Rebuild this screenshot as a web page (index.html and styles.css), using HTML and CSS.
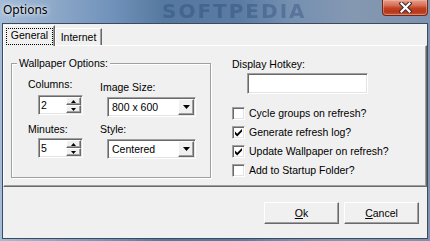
FILE: index.html
```html
<!DOCTYPE html>
<html lang="en">
<head>
    <meta charset="UTF-8">
    <meta name="viewport" content="width=device-width, initial-scale=1.0">
    <title>Options</title>
    <link rel="stylesheet" href="styles.css">
</head>
<body>
    <div class="window">
        <div class="titlebar">
            <span class="title">Options</span>
            <span class="watermark">SOFTPEDIA</span>
            <button class="close-btn" type="button">
                <svg width="13" height="11" viewBox="0 0 13 11">
                    <path d="M2.5 1.5 L10.5 9.5 M10.5 1.5 L2.5 9.5" stroke="#3a2a2a" stroke-width="4.2" stroke-linecap="square"/>
                    <path d="M2.5 1.5 L10.5 9.5 M10.5 1.5 L2.5 9.5" stroke="#fff" stroke-width="2.2" stroke-linecap="square"/>
                </svg>
            </button>
        </div>

        <div class="client">
            <div class="tabs">
                <div class="tab active"><span class="focus">General</span></div>
                <div class="tab">Internet</div>
            </div>

            <div class="tab-panel">
                <fieldset class="group">
                    <legend>Wallpaper Options:</legend>
                    <div class="group-grid">
                        <div class="field-col col-a">
                            <label class="lbl">Columns:</label>
                            <div class="spinner">
                                <span class="spin-value">2</span>
                                <span class="spin-buttons">
                                    <span class="spin-btn"><svg width="5" height="3" viewBox="0 0 5 3"><path d="M2.5 0 L5 3 L0 3 Z"/></svg></span>
                                    <span class="spin-btn"><svg width="5" height="3" viewBox="0 0 5 3"><path d="M0 0 L5 0 L2.5 3 Z"/></svg></span>
                                </span>
                            </div>
                            <label class="lbl lbl-second">Minutes:</label>
                            <div class="spinner spinner-second">
                                <span class="spin-value">5</span>
                                <span class="spin-buttons">
                                    <span class="spin-btn"><svg width="5" height="3" viewBox="0 0 5 3"><path d="M2.5 0 L5 3 L0 3 Z"/></svg></span>
                                    <span class="spin-btn"><svg width="5" height="3" viewBox="0 0 5 3"><path d="M0 0 L5 0 L2.5 3 Z"/></svg></span>
                                </span>
                            </div>
                        </div>
                        <div class="field-col col-b">
                            <label class="lbl">Image Size:</label>
                            <div class="combo">
                                <span class="combo-value">800 x 600</span>
                                <span class="combo-btn"><svg width="7" height="4" viewBox="0 0 7 4"><path d="M0 0 L7 0 L3.5 4 Z"/></svg></span>
                            </div>
                            <label class="lbl lbl-style">Style:</label>
                            <div class="combo combo-second">
                                <span class="combo-value">Centered</span>
                                <span class="combo-btn"><svg width="7" height="4" viewBox="0 0 7 4"><path d="M0 0 L7 0 L3.5 4 Z"/></svg></span>
                            </div>
                        </div>
                    </div>
                </fieldset>

                <div class="right-col">
                    <label class="lbl">Display Hotkey:</label>
                    <div class="textbox"></div>
                    <ul class="checks">
                        <li><span class="checkbox"></span>Cycle groups on refresh?</li>
                        <li><span class="checkbox"><svg width="9" height="9" viewBox="0 0 9 9"><path d="M1 3.5 L3.2 5.7 L8 1 L8 3.6 L3.2 8.4 L1 6.2 Z"/></svg></span>Generate refresh log?</li>
                        <li><span class="checkbox"><svg width="9" height="9" viewBox="0 0 9 9"><path d="M1 3.5 L3.2 5.7 L8 1 L8 3.6 L3.2 8.4 L1 6.2 Z"/></svg></span>Update Wallpaper on refresh?</li>
                        <li><span class="checkbox"></span>Add to Startup Folder?</li>
                    </ul>
                </div>
            </div>

            <div class="buttons">
                <button class="btn" type="button"><u>O</u>k</button>
                <button class="btn" type="button"><u>C</u>ancel</button>
            </div>
        </div>
    </div>
</body>
</html>
```

FILE: styles.css
```css
body {
    margin: 0;
    width: 430px;
    height: 241px;
    overflow: hidden;
    font-family: "Liberation Sans", Arial, sans-serif;
    font-size: 10.5px;
    color: #000;
}

.window {
    width: 430px;
    height: 241px;
    box-sizing: border-box;
    padding: 0 2px 2px;
    display: flex;
    flex-direction: column;
    background: linear-gradient(90deg, #a3bcd9 0%, #8ea9c9 12%, #7192ba 26%, #56799f 38%, #5a7ba2 55%, #7590b1 68%, #8598b2 82%, #7f92ad 100%);
}

/* title bar */
.titlebar {
    position: relative;
    height: 23px;
    flex-shrink: 0;
    display: flex;
    justify-content: space-between;
    align-items: flex-start;
    padding-left: 1px;
}

.title {
    position: relative;
    z-index: 1;
    font-family: "Noto Sans", sans-serif;
    font-size: 12px;
    line-height: 16px;
    padding-top: 2px;
    color: #000;
    text-shadow: 0 0 6px #fff, 0 0 3px rgba(255, 255, 255, 0.8);
}

.watermark {
    position: absolute;
    left: 160px;
    top: 1px;
    font-family: "DejaVu Sans", sans-serif;
    font-weight: bold;
    font-size: 20px;
    line-height: 20px;
    letter-spacing: 2px;
    color: rgba(28, 58, 108, 0.32);
    filter: blur(0.5px);
}

.close-btn {
    position: relative;
    z-index: 1;
    width: 46px;
    height: 16px;
    padding: 0;
    border: 1px solid #6b2a1e;
    border-top: 0;
    border-radius: 0 0 4px 4px;
    background: linear-gradient(180deg, #e6a08b 0%, #d7705a 35%, #c2401f 55%, #b5381a 80%, #cf5a36 100%);
    box-shadow: inset 0 0 0 1px rgba(255, 200, 180, 0.4);
    display: flex;
    align-items: center;
    justify-content: center;
}

/* client area */
.client {
    flex: 1;
    background: #f0f0f0;
    border: 1px solid #3d4a5c;
}

.tabs {
    position: relative;
    z-index: 1;
    display: flex;
    align-items: flex-end;
    height: 21px;
    padding-top: 1px;
    margin-bottom: -1px;
}

.tab {
    width: 47px;
    height: 17px;
    box-sizing: border-box;
    margin-bottom: 1px;
    padding-top: 2px;
    text-align: center;
    line-height: 13px;
    background: #f0f0f0;
    border: 1px solid;
    border-bottom: 0;
    border-color: #fff #696969 transparent #fff;
    box-shadow: inset -1px 0 0 #a0a0a0;
}

.tab.active {
    width: 52px;
    height: 21px;
    margin-bottom: 0;
    padding: 2px 1px 0 2px;
}

.focus {
    display: block;
    height: 17px;
    box-sizing: border-box;
    border: 1px dotted #000;
}

.tab-panel {
    display: flex;
    align-items: flex-start;
    height: 142px;
    box-sizing: border-box;
    padding: 11px 0 0 7px;
    border: 1px solid;
    border-color: #fff #696969 #696969 #fff;
    box-shadow: inset -1px -1px 0 #a0a0a0;
}

/* group box */
.group {
    width: 200px;
    box-sizing: border-box;
    margin: 0;
    padding: 0;
    border: 1px solid #a0a0a0;
    box-shadow: 1px 1px 0 #fff, inset 1px 1px 0 #fff;
}

.group legend {
    margin-left: 5px;
    padding: 0 2px;
    line-height: 13px;
    background: #f0f0f0;
}

.group-grid {
    display: flex;
    padding: 8px 0 18px 16px;
}

.field-col {
    display: flex;
    flex-direction: column;
    align-items: flex-start;
}

.col-a {
    width: 72px;
}

.col-b {
    padding-top: 3px;
}

.lbl {
    display: block;
    line-height: 13px;
}

.lbl-second {
    margin-top: 8px;
}

.lbl-style {
    margin-top: 6px;
}

/* sunken controls */
.spinner,
.combo,
.textbox,
.checkbox {
    box-sizing: border-box;
    background: #fff;
    border: 1px solid;
    border-color: #a0a0a0 #fff #fff #a0a0a0;
    box-shadow: inset 1px 1px 0 #696969, inset -1px -1px 0 #e3e3e3;
}

.spinner {
    display: flex;
    width: 45px;
    height: 20px;
    padding: 1px;
    margin: 4px 0 0 10px;
}

.spinner-second {
    margin-top: 2px;
}

.spin-value {
    flex: 1;
    padding-left: 1px;
    line-height: 16px;
}

.spin-buttons {
    display: flex;
    flex-direction: column;
    width: 15px;
}

.spin-btn,
.combo-btn {
    display: flex;
    align-items: center;
    justify-content: center;
    box-sizing: border-box;
    background: #f0f0f0;
    border: 1px solid;
    border-color: #fff #696969 #696969 #fff;
    box-shadow: inset -1px -1px 0 #a0a0a0;
}

.spin-btn {
    flex: 1;
}

.combo {
    display: flex;
    width: 89px;
    height: 20px;
    padding: 1px;
    margin: 3px 0 0 7px;
}

.combo-second {
    margin-top: 3px;
}

.combo-value {
    flex: 1;
    padding-left: 3px;
    line-height: 16px;
}

.combo-btn {
    width: 16px;
}

/* right column */
.right-col {
    margin-left: 21px;
    padding-top: 1px;
}

.textbox {
    width: 121px;
    height: 21px;
    margin: 2px 0 0 15px;
}

.checks {
    list-style: none;
    margin: 13px 0 0;
    padding: 0;
    display: flex;
    flex-direction: column;
    gap: 6px;
}

.checks li {
    display: flex;
    align-items: center;
    height: 13px;
    line-height: 13px;
}

.checkbox {
    width: 13px;
    height: 13px;
    padding: 1px;
    margin-right: 4px;
    flex-shrink: 0;
    display: flex;
}

/* dialog buttons */
.buttons {
    display: flex;
    justify-content: flex-end;
    gap: 5px;
    padding: 15px 8px 0 0;
}

.btn {
    width: 75px;
    height: 22px;
    padding: 0;
    font-family: inherit;
    font-size: inherit;
    color: #000;
    background: #f0f0f0;
    border: 1px solid;
    border-color: #fff #696969 #696969 #fff;
    box-shadow: inset -1px -1px 0 #a0a0a0;
}
```
